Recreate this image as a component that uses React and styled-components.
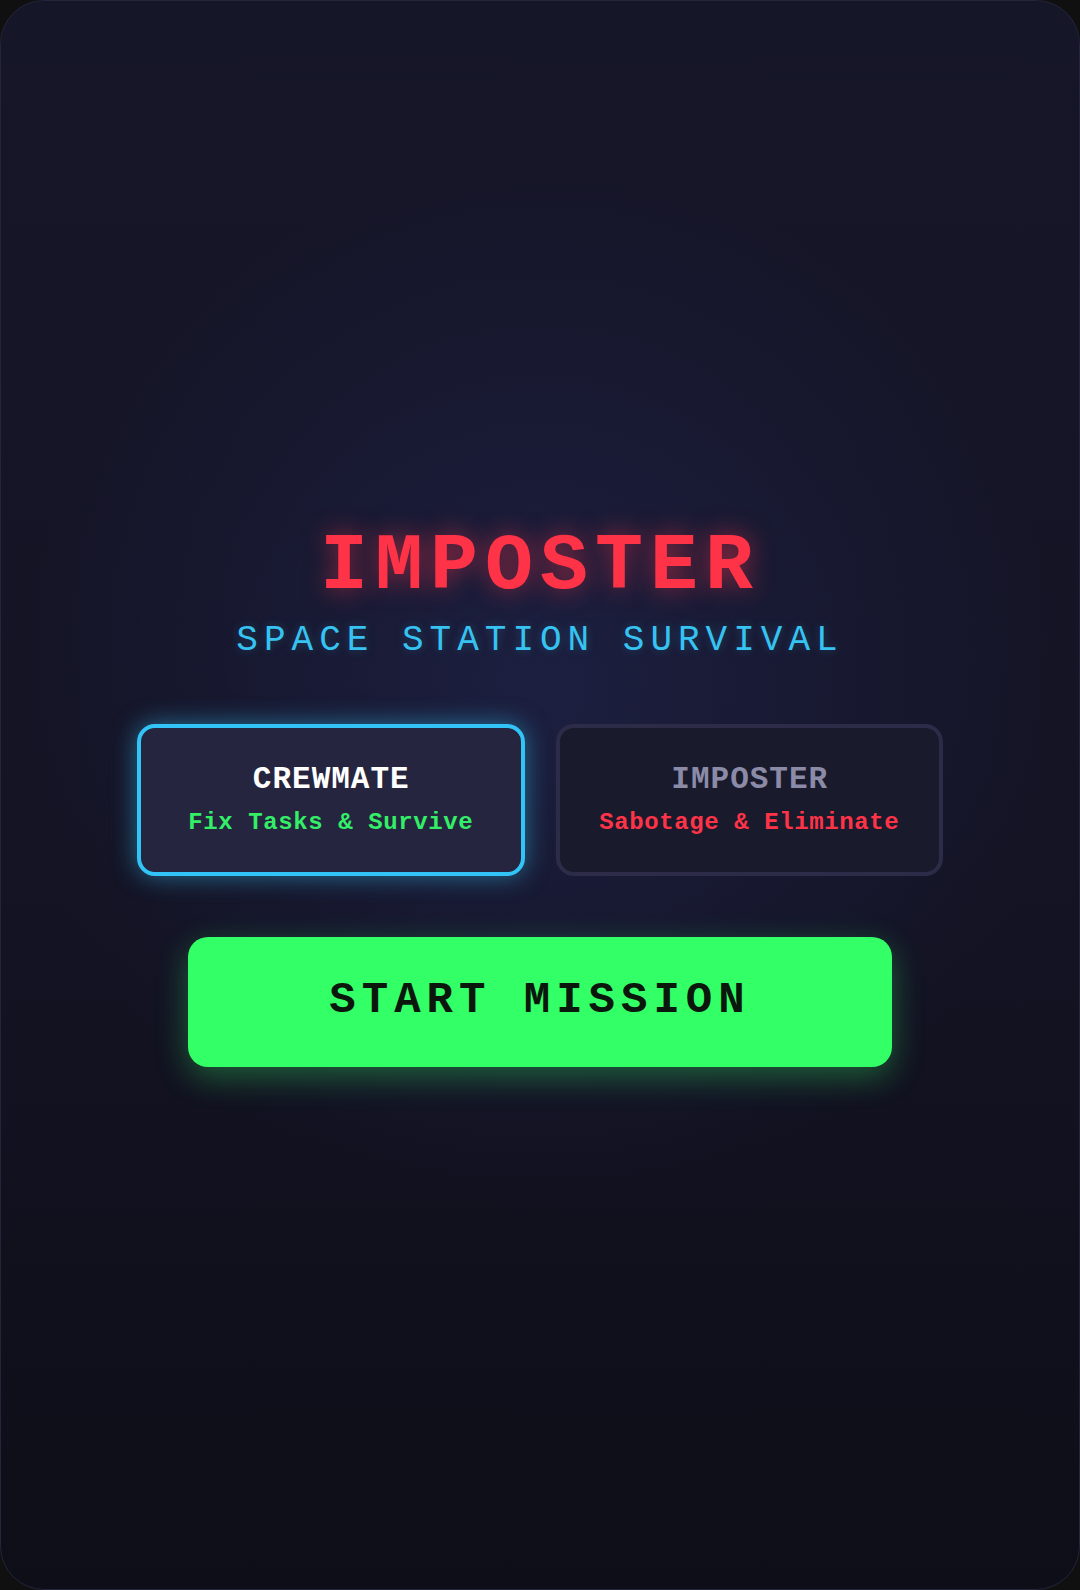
import React, { useState } from 'react';
import styled, { createGlobalStyle } from 'styled-components';

const GlobalStyle = createGlobalStyle`
  html, body {
    margin: 0;
    padding: 0;
    background: #101010;
  }
  * {
    box-sizing: border-box;
  }
`;

const Screen = styled.div`
  width: 1080px;
  height: 1590px;
  border-radius: 44px;
  overflow: hidden;
  border: 1px solid #24243a;
  padding-top: 3px;
  background:
    radial-gradient(ellipse 520px 520px at 540px 690px, rgba(38, 44, 96, 0.45), rgba(38, 44, 96, 0) 100%),
    linear-gradient(180deg, #161629 0%, #141425 50%, #0e0e18 100%);
  display: flex;
  flex-direction: column;
  align-items: center;
  justify-content: center;
  font-family: "Liberation Mono", "DejaVu Sans Mono", monospace;
`;

const Title = styled.h1`
  margin: 0;
  font-size: 80px;
  line-height: 80px;
  font-weight: 700;
  letter-spacing: 7px;
  color: #ff3347;
  text-shadow: 0 0 24px rgba(255, 51, 71, 0.55);
`;

const Subtitle = styled.p`
  margin: 14px 0 0;
  font-size: 36px;
  line-height: 40px;
  letter-spacing: 6px;
  color: #36c3f2;
  text-shadow: 0 0 10px rgba(54, 195, 242, 0.25);
`;

const RoleRow = styled.div`
  width: 806px;
  display: grid;
  grid-template-columns: 1fr 1fr;
  gap: 31px;
  margin-top: 63px;
`;

const RoleCard = styled.button`
  height: 152px;
  border-radius: 18px;
  border: 4px solid ${p => (p.$active ? '#32c4f6' : '#2c2c48')};
  background: ${p => (p.$active ? '#252540' : '#1a1a2d')};
  box-shadow: ${p => (p.$active ? '0 0 24px rgba(50, 196, 246, 0.5)' : 'none')};
  display: flex;
  flex-direction: column;
  align-items: center;
  justify-content: center;
  gap: 12px;
  cursor: pointer;
  font-family: inherit;
  padding: 0;
`;

const RoleName = styled.span`
  font-size: 31px;
  line-height: 34px;
  font-weight: 700;
  letter-spacing: 1px;
  padding-left: 1px;
  color: ${p => (p.$active ? '#ffffff' : '#8b8ba8')};
`;

const RoleGoal = styled.span`
  font-size: 24px;
  line-height: 28px;
  font-weight: 700;
  letter-spacing: 0.6px;
  color: ${p => p.$color};
`;

const StartButton = styled.button`
  margin-top: 61px;
  width: 704px;
  height: 130px;
  border: none;
  border-radius: 20px;
  background: #33ff66;
  box-shadow: 0 10px 32px rgba(51, 255, 102, 0.32);
  font-family: inherit;
  font-size: 44px;
  line-height: 44px;
  font-weight: 700;
  letter-spacing: 6px;
  padding: 0 0 4px 0;
  color: #0b160d;
  cursor: pointer;
`;

const roles = [
  { id: 'crewmate', name: 'CREWMATE', goal: 'Fix Tasks & Survive', color: '#33ee66' },
  { id: 'imposter', name: 'IMPOSTER', goal: 'Sabotage & Eliminate', color: '#ff3347' },
];

export default function App() {
  const [role, setRole] = useState('crewmate');

  return (
    <>
      <GlobalStyle />
      <Screen>
        <Title>IMPOSTER</Title>
        <Subtitle>SPACE STATION SURVIVAL</Subtitle>
        <RoleRow>
          {roles.map(r => (
            <RoleCard key={r.id} $active={role === r.id} onClick={() => setRole(r.id)}>
              <RoleName $active={role === r.id}>{r.name}</RoleName>
              <RoleGoal $color={r.color}>{r.goal}</RoleGoal>
            </RoleCard>
          ))}
        </RoleRow>
        <StartButton>START MISSION</StartButton>
      </Screen>
    </>
  );
}
